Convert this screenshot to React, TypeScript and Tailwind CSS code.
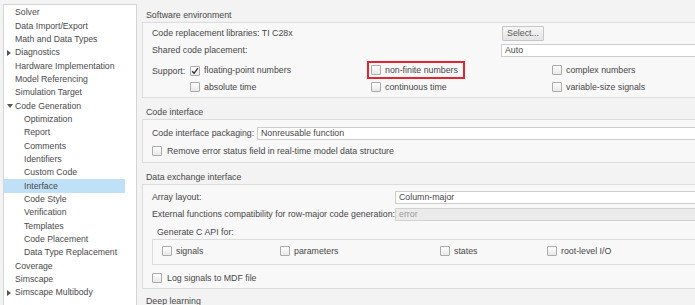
import React from 'react';

type NavItem = { label: string; level: number; arrow?: 'right' | 'down'; selected?: boolean };

const navItems: NavItem[] = [
  { label: 'Solver', level: 0 },
  { label: 'Data Import/Export', level: 0 },
  { label: 'Math and Data Types', level: 0 },
  { label: 'Diagnostics', level: 0, arrow: 'right' },
  { label: 'Hardware Implementation', level: 0 },
  { label: 'Model Referencing', level: 0 },
  { label: 'Simulation Target', level: 0 },
  { label: 'Code Generation', level: 0, arrow: 'down' },
  { label: 'Optimization', level: 1 },
  { label: 'Report', level: 1 },
  { label: 'Comments', level: 1 },
  { label: 'Identifiers', level: 1 },
  { label: 'Custom Code', level: 1 },
  { label: 'Interface', level: 1, selected: true },
  { label: 'Code Style', level: 1 },
  { label: 'Verification', level: 1 },
  { label: 'Templates', level: 1 },
  { label: 'Code Placement', level: 1 },
  { label: 'Data Type Replacement', level: 1 },
  { label: 'Coverage', level: 0 },
  { label: 'Simscape', level: 0 },
  { label: 'Simscape Multibody', level: 0, arrow: 'right' },
];

const Arrow: React.FC<{ dir: 'right' | 'down' }> = ({ dir }) =>
  dir === 'right' ? (
    <svg width="4" height="6" viewBox="0 0 4 6">
      <path d="M0 0 L4 3 L0 6 Z" fill="#555" />
    </svg>
  ) : (
    <svg width="6" height="4" viewBox="0 0 6 4">
      <path d="M0 0 L6 0 L3 4 Z" fill="#555" />
    </svg>
  );

const Checkbox: React.FC<{ checked?: boolean }> = ({ checked }) => (
  <span className="inline-flex h-[10px] w-[10px] shrink-0 items-center justify-center rounded-[1px] border border-[#ababab] bg-gradient-to-b from-white to-[#e8e8e8]">
    {checked && (
      <svg width="8" height="8" viewBox="0 0 8 8">
        <path d="M1.2 4.2 L3.1 6.3 L6.9 1.2" fill="none" stroke="#2b2b2b" strokeWidth="1.3" />
      </svg>
    )}
  </span>
);

const Check: React.FC<{ label: string; checked?: boolean }> = ({ label, checked }) => (
  <span className="inline-flex items-center gap-[4px] whitespace-nowrap">
    <Checkbox checked={checked} />
    <span>{label}</span>
  </span>
);

const Field: React.FC<{ value: string; disabled?: boolean }> = ({ value, disabled }) => (
  <div
    className={
      disabled
        ? 'flex h-[13px] flex-1 items-center border border-[#d2d2d2] bg-[#ebebeb] pl-[3px] text-[#9a9a9a]'
        : 'flex h-[13px] flex-1 items-center border border-[#cdcdcd] bg-white pl-[3px]'
    }
  >
    {value}
  </div>
);

const App: React.FC = () => {
  return (
    <div className="flex h-[305px] w-[695px] overflow-hidden bg-[#f3f3f3] font-['Liberation_Sans',Arial,sans-serif] text-[8.8px] leading-none text-[#474747]">
      {/* tree */}
      <div className="h-full w-[137px] shrink-0 pl-[3px] pt-[4px]">
        <div className="h-full w-[134px] border border-b-0 border-[#d4d4d4] bg-white pt-[1px]">
          {navItems.map((item) => (
            <div
              key={item.label}
              className={
                (item.selected ? 'bg-[#bfe0f6] ' : '') +
                (item.level === 0 ? 'pl-[3px] ' : 'pl-[20px] ') +
                'flex h-[13.33px] w-[121px] items-center whitespace-nowrap text-[8.7px] text-[#4a4a4a]'
              }
            >
              {item.level === 0 && (
                <span className="flex w-[8px] items-center">{item.arrow && <Arrow dir={item.arrow} />}</span>
              )}
              <span>{item.label}</span>
            </div>
          ))}
        </div>
      </div>

      {/* settings */}
      <main className="flex-1 overflow-hidden pl-[5px] pt-[8px]">
        <div className="w-[640px]">
          <h3 className="h-[14px] pl-[4px] leading-[14px]">Software environment</h3>
          <div className="border border-[#dcdcdc] bg-[#f8f8f8] px-[9px] pb-[1px] pt-[2px]">
            <div className="flex h-[17px] items-center">
              <span className="w-[349px] shrink-0">Code replacement libraries: TI C28x</span>
              <button className="ml-[1px] flex h-[15px] w-[42px] items-center justify-center rounded-[1px] border border-[#c6c6c6] bg-gradient-to-b from-[#f7f7f7] to-[#e4e4e4] text-[#555]">
                Select...
              </button>
            </div>
            <div className="flex h-[17px] items-center">
              <span className="w-[349px] shrink-0">Shared code placement:</span>
              <Field value="Auto" />
            </div>
            <div className="mt-[3px] flex h-[18px] items-center">
              <span className="w-[38px] shrink-0">Support:</span>
              <span className="w-[181px] shrink-0">
                <Check label="floating-point numbers" checked />
              </span>
              <span className="w-[181px] shrink-0">
                <span className="inline-flex items-center pr-[3px] outline-2 outline-offset-2 outline-[#e3262d] outline-solid">
                  <Check label="non-finite numbers" />
                </span>
              </span>
              <span className="w-[181px] shrink-0">
                <Check label="complex numbers" />
              </span>
            </div>
            <div className="flex h-[16px] items-center">
              <span className="w-[38px] shrink-0" />
              <span className="w-[181px] shrink-0">
                <Check label="absolute time" />
              </span>
              <span className="w-[181px] shrink-0">
                <Check label="continuous time" />
              </span>
              <span className="w-[181px] shrink-0">
                <Check label="variable-size signals" />
              </span>
            </div>
          </div>

          <h3 className="mt-[7px] h-[14px] pl-[4px] leading-[14px]">Code interface</h3>
          <div className="border border-[#dcdcdc] bg-[#f8f8f8] px-[9px] pb-[2px] pt-[5px]">
            <div className="flex h-[16px] items-center">
              <span className="w-[105px] shrink-0">Code interface packaging:</span>
              <Field value="Nonreusable function" />
            </div>
            <div className="mt-[1px] flex h-[18px] items-center">
              <span className="inline-flex items-center gap-[5px]">
                <Checkbox />
                <span>Remove error status field in real-time model data structure</span>
              </span>
            </div>
          </div>

          <h3 className="mt-[7px] h-[14px] pl-[4px] leading-[14px]">Data exchange interface</h3>
          <div className="border border-[#dcdcdc] bg-[#f8f8f8] px-[9px] pb-[2px] pt-[4px]">
            <div className="flex h-[16px] items-center">
              <span className="w-[243px] shrink-0">Array layout:</span>
              <Field value="Column-major" />
            </div>
            <div className="mt-[1px] flex h-[16px] items-center">
              <span className="w-[243px] shrink-0">External functions compatibility for row-major code generation:</span>
              <Field value="error" disabled />
            </div>
            <div className="mt-[3px] flex h-[14px] items-center pl-[5px]">Generate C API for:</div>
            <div className="flex h-[26px] items-center border border-[#dcdcdc] bg-[#f8f8f8] pl-[9px]">
              <span className="w-[118px] shrink-0">
                <Check label="signals" />
              </span>
              <span className="w-[160px] shrink-0">
                <Check label="parameters" />
              </span>
              <span className="w-[107px] shrink-0">
                <Check label="states" />
              </span>
              <span className="shrink-0">
                <Check label="root-level I/O" />
              </span>
            </div>
            <div className="mt-[5px] flex h-[16px] items-center">
              <span className="inline-flex items-center gap-[5px]">
                <Checkbox />
                <span>Log signals to MDF file</span>
              </span>
            </div>
          </div>

          <h3 className="mt-[5px] h-[14px] pl-[4px] leading-[14px]">Deep learning</h3>
        </div>
      </main>
    </div>
  );
};

export default App;
